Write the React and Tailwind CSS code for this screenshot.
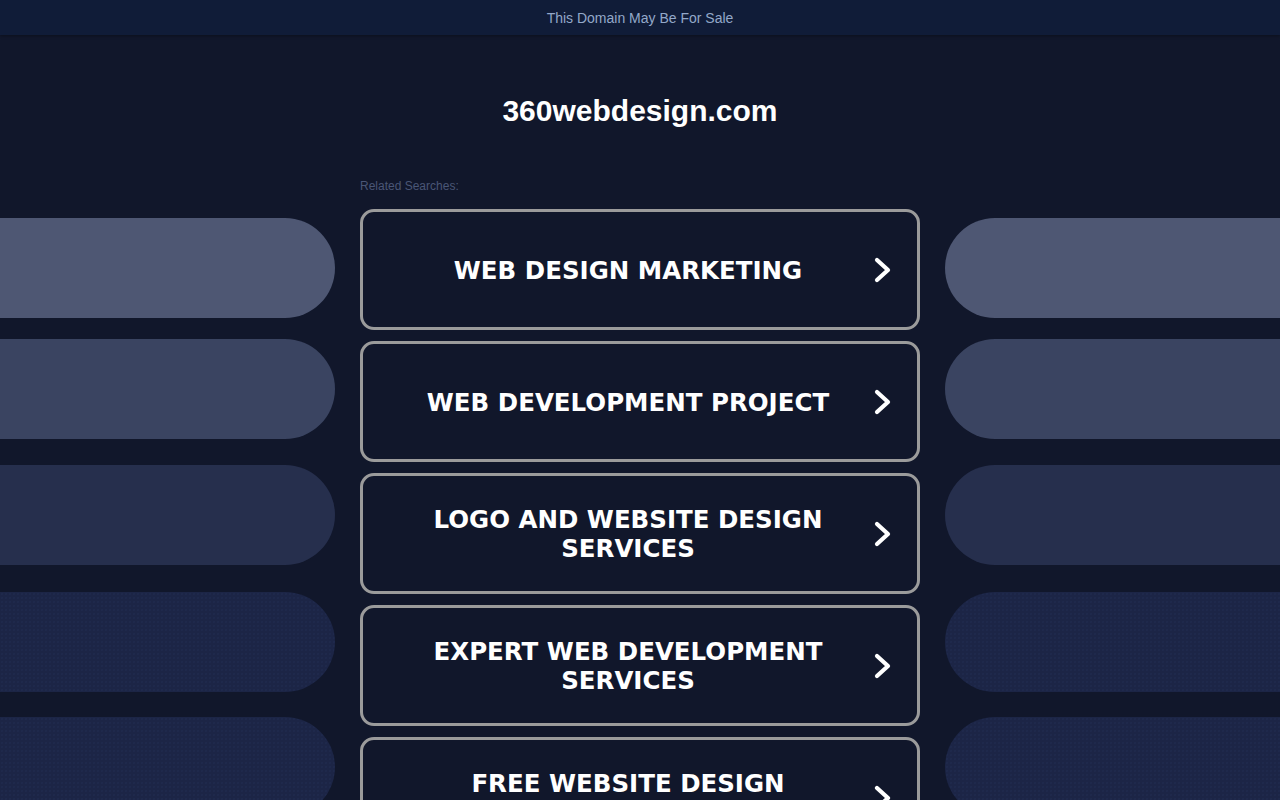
import React from "react";

const items = [
  "WEB DESIGN MARKETING",
  "WEB DEVELOPMENT PROJECT",
  "LOGO AND WEBSITE DESIGN SERVICES",
  "EXPERT WEB DEVELOPMENT SERVICES",
  "FREE WEBSITE DESIGN TEMPLATES",
];

function Chevron() {
  return (
    <svg width="20" height="28" viewBox="0 0 20 28" className="shrink-0">
      <polyline
        points="4,4 15,14 4,24"
        fill="none"
        stroke="#ffffff"
        strokeWidth="4.2"
        strokeLinecap="round"
        strokeLinejoin="round"
      />
    </svg>
  );
}

function SidePills({ side }) {
  const r = side === "left" ? "rounded-r-full" : "rounded-l-full";
  const dots =
    "bg-[#1c2546] bg-[radial-gradient(circle,#202a4d_0.6px,transparent_1px)] bg-[length:4px_4px]";
  return (
    <div className="flex flex-col pt-[9px]">
      <div className={`h-[100px] ${r} bg-[#4e5773]`} />
      <div className={`h-[100px] mt-[21px] ${r} bg-[#3a4461]`} />
      <div className={`h-[100px] mt-[26px] ${r} bg-[#262f4d]`} />
      <div className={`h-[100px] mt-[27px] ${r} ${dots}`} />
      <div className={`h-[100px] mt-[25px] ${r} ${dots}`} />
    </div>
  );
}

export default function App() {
  return (
    <div className="min-h-[800px] h-[800px] overflow-hidden bg-[#11172b] font-['Liberation_Sans',Arial,sans-serif]">
      <div className="h-[35px] bg-[#101c38] flex items-center justify-center pt-[2px] shadow-[0_1px_3px_rgba(0,0,0,0.35)]">
        <span className="text-[14px] text-[#93a8c9]">This Domain May Be For Sale</span>
      </div>

      <h1 className="mt-[58px] text-center text-[30px] font-bold text-white leading-[36px]">
        360webdesign.com
      </h1>

      <div className="mt-[50px] w-[560px] mx-auto">
        <p className="text-[12px] text-[#4a5676] leading-[14px]">Related Searches:</p>
      </div>

      <div className="mt-[16px] grid grid-cols-[1fr_560px_1fr] gap-x-[25px]">
        <SidePills side="left" />
        <div className="flex flex-col gap-[11px]">
          {items.map((t) => (
            <a
              key={t}
              href="#"
              className="h-[121px] shrink-0 border-[3px] border-[#9b9b9b] rounded-[14px] bg-[#11172b] flex items-center pl-[38px] pr-[24px]"
            >
              <span className="flex-1 pr-[18px] pt-[1px] text-center text-white font-bold text-[24.5px] leading-[29px] font-['DejaVu_Sans',Verdana,sans-serif]">
                {t}
              </span>
              <Chevron />
            </a>
          ))}
        </div>
        <SidePills side="right" />
      </div>
    </div>
  );
}
